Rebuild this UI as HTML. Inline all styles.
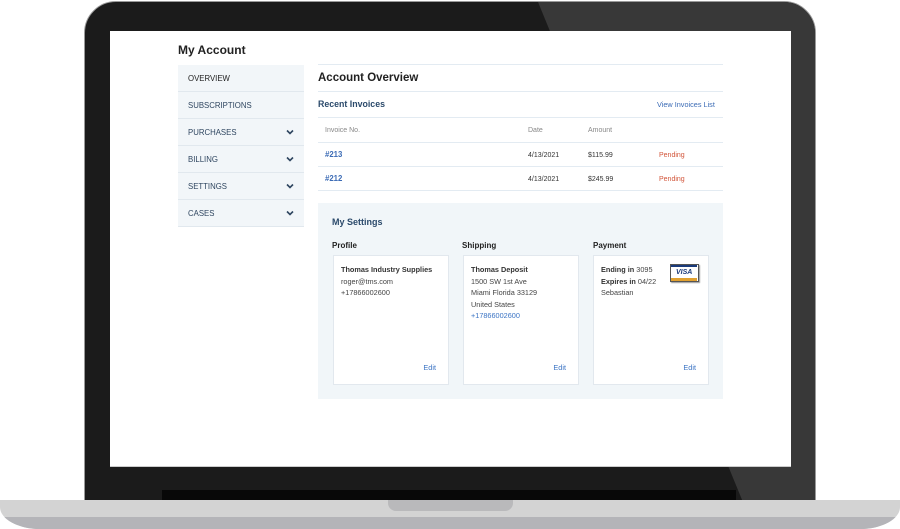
<!DOCTYPE html>
<html><head><style>
*{margin:0;padding:0;box-sizing:border-box}
body{width:900px;height:529px;background:#fff;position:relative;overflow:hidden;font-family:"Liberation Sans",sans-serif;color:#333}
.a{position:absolute}
.t{position:absolute;white-space:nowrap;line-height:1}
.nav{position:absolute;left:178px;width:126px;height:27px;background:#f2f6f9;border-bottom:1px solid #e1e8ee;font-size:7.8px;color:#2f4660;padding:9px 0 0 10px}
.nav svg{position:absolute;right:10px;top:10px}
.hl{position:absolute;left:318px;width:405px;height:1px;background:#e3ebf2}
.card{position:absolute;top:255px;width:116px;height:130px;background:#fff;border:1px solid #e2e8ee;padding:8px 0 0 7px;font-size:7.3px;line-height:11.5px;color:#444}
.card b{color:#333}
.edit{position:absolute;right:12px;bottom:13px;color:#3b74c4;line-height:1}
.lbl{position:absolute;top:241px;font-size:8px;font-weight:bold;color:#222}
</style></head><body>
<div class="a" style="left:84px;top:1px;width:732px;height:510px;border-radius:32px 32px 0 0;background:#1b1b1b;border:1px solid #9a9a9a;overflow:hidden">
<div class="a" style="left:0;top:0;width:732px;height:510px;background:#383838;clip-path:polygon(453px 0,732px 0,732px 510px,662px 510px)"></div>
</div>
<div class="a" style="left:162px;top:490px;width:574px;height:12px;background:#080808"></div>
<div class="a" style="left:110px;top:31px;width:681px;height:436px;background:#fff;border-bottom:1px solid #ccc"></div>
<div class="a" style="left:0;top:500px;width:900px;height:29px;background:#d3d3d3;border-radius:0 0 40px 40px/0 0 22px 22px;overflow:hidden">
<div class="a" style="left:0;top:17px;width:900px;height:12px;background:#b4b4b8"></div>
</div>
<div class="a" style="left:388px;top:500px;width:125px;height:11px;background:#b9b9bb;border-radius:0 0 8px 8px"></div>

<div class="t" style="left:178px;top:44px;font-size:12px;font-weight:bold;color:#222;top:44px">My Account</div>
<div class="nav" style="top:65px;color:#222">OVERVIEW</div>
<div class="nav" style="top:92px">SUBSCRIPTIONS</div>
<div class="nav" style="top:119px">PURCHASES<svg width="8" height="6" viewBox="0 0 8 6"><path d="M1 1.5L4 4.5L7 1.5" stroke="#2f4660" stroke-width="1.6" fill="none"/></svg></div>
<div class="nav" style="top:146px">BILLING<svg width="8" height="6" viewBox="0 0 8 6"><path d="M1 1.5L4 4.5L7 1.5" stroke="#2f4660" stroke-width="1.6" fill="none"/></svg></div>
<div class="nav" style="top:173px">SETTINGS<svg width="8" height="6" viewBox="0 0 8 6"><path d="M1 1.5L4 4.5L7 1.5" stroke="#2f4660" stroke-width="1.6" fill="none"/></svg></div>
<div class="nav" style="top:200px">CASES<svg width="8" height="6" viewBox="0 0 8 6"><path d="M1 1.5L4 4.5L7 1.5" stroke="#2f4660" stroke-width="1.6" fill="none"/></svg></div>

<div class="hl" style="top:64px"></div>
<div class="t" style="left:318px;top:73px;font-size:11.5px;font-weight:bold;color:#222">Account Overview</div>
<div class="hl" style="top:91px"></div>
<div class="t" style="left:318px;top:100px;font-size:8.8px;font-weight:bold;color:#2b4a6b">Recent Invoices</div>
<div class="t" style="left:657px;top:101px;font-size:7.3px;color:#3b6bb5">View Invoices List</div>
<div class="hl" style="top:117px"></div>
<div class="t" style="left:325px;top:127px;font-size:7px;color:#888">Invoice No.</div>
<div class="t" style="left:528px;top:127px;font-size:7px;color:#888">Date</div>
<div class="t" style="left:588px;top:127px;font-size:7px;color:#888">Amount</div>
<div class="hl" style="top:142px"></div>
<div class="t" style="left:325px;top:151px;font-size:7.8px;font-weight:bold;color:#3b6bb5">#213</div>
<div class="t" style="left:528px;top:152px;font-size:7px;color:#333">4/13/2021</div>
<div class="t" style="left:588px;top:152px;font-size:7px;color:#333">$115.99</div>
<div class="t" style="left:659px;top:152px;font-size:7px;color:#d2553a">Pending</div>
<div class="hl" style="top:166px"></div>
<div class="t" style="left:325px;top:175px;font-size:7.8px;font-weight:bold;color:#3b6bb5">#212</div>
<div class="t" style="left:528px;top:176px;font-size:7px;color:#333">4/13/2021</div>
<div class="t" style="left:588px;top:176px;font-size:7px;color:#333">$245.99</div>
<div class="t" style="left:659px;top:176px;font-size:7px;color:#d2553a">Pending</div>
<div class="hl" style="top:190px"></div>

<div class="a" style="left:318px;top:203px;width:405px;height:196px;background:#f1f6f9"></div>
<div class="t" style="left:332px;top:218px;font-size:9px;font-weight:bold;color:#2b4a6b">My Settings</div>
<div class="lbl" style="left:332px">Profile</div>
<div class="lbl" style="left:462px">Shipping</div>
<div class="lbl" style="left:593px">Payment</div>
<div class="card" style="left:333px"><b>Thomas Industry Supplies</b><br>roger@tms.com<br>+17866002600<span class="edit">Edit</span></div>
<div class="card" style="left:463px"><b>Thomas Deposit</b><br>1500 SW 1st Ave<br>Miami Florida 33129<br>United States<br><span style="color:#3b74c4">+17866002600</span><span class="edit">Edit</span></div>
<div class="card" style="left:593px"><b>Ending in</b> 3095<br><b>Expires in</b> 04/22<br>Sebastian<span class="edit">Edit</span>
<div class="a" style="left:76px;top:8px;width:29px;height:18px;background:#fff;border:1.5px solid #555;box-shadow:1px 1px 1px #999"><div class="a" style="left:0;top:0;width:26px;height:2px;background:#1a3a7a"></div><div class="t" style="left:5px;top:4px;font-size:7px;font-weight:bold;font-style:italic;color:#1a3a7a">VISA</div><div class="a" style="left:0;bottom:0;width:26px;height:3px;background:#e0a030"></div></div>
</div>
</body></html>
